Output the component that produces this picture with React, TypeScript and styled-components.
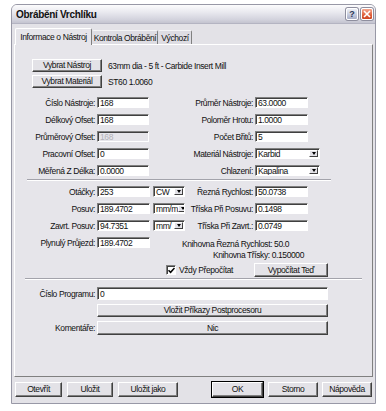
import React from "react";
import styled, { createGlobalStyle } from "styled-components";

const GlobalStyle = createGlobalStyle`
  html, body {
    margin: 0;
    padding: 0;
    background: #ffffff;
  }
  body {
    font-family: "Liberation Sans", Arial, sans-serif;
    font-size: 8.5px;
    letter-spacing: -0.4px;
    color: #111;
  }
  * {
    box-sizing: border-box;
  }
`;

const Window = styled.div`
  margin: 4px 0 0 11px;
  width: 365px;
  height: 400px;
  border: 1px solid #9898a6;
  border-radius: 6px 6px 0 0;
  background: #e3e2e7;
  display: flex;
  flex-direction: column;
  overflow: hidden;
`;

const TitleBar = styled.div`
  height: 19px;
  flex: none;
  display: flex;
  align-items: center;
  padding: 0 2px 0 4px;
  background: linear-gradient(#fcfcfd, #e9e9ef 40%, #d3d3dd 80%, #c4c4d0);
  border-bottom: 1px solid #b4b4c2;

  .title {
    font-weight: bold;
    font-size: 10px;
    letter-spacing: -0.3px;
    flex: 1;
  }
`;

const CaptionButton = styled.div<{ $close?: boolean }>`
  width: 12px;
  height: 12px;
  margin-left: 3px;
  border: 1px solid #fff;
  border-radius: 2px;
  display: flex;
  align-items: center;
  justify-content: center;
  font-weight: bold;
  font-size: 9px;
  letter-spacing: 0;
  color: ${(p) => (p.$close ? "#fff" : "#2b3555")};
  background: ${(p) =>
    p.$close
      ? "linear-gradient(#f4a890, #e0603c 60%, #cc4422)"
      : "linear-gradient(#eef0f6, #c3c9dc 60%, #a9b0c8)"};
  box-shadow: 0 0 0 1px #8e8e9e;
`;

const Body = styled.div`
  flex: 1;
  display: flex;
  flex-direction: column;
  padding: 4px 2px 6px 2px;
`;

const TabStrip = styled.div`
  height: 16px;
  display: flex;
  align-items: flex-end;
  padding-left: 1px;
  position: relative;
  z-index: 1;
`;

const Tab = styled.div<{ $active?: boolean; $w: number }>`
  width: ${(p) => p.$w}px;
  height: ${(p) => (p.$active ? "17px" : "14px")};
  margin-bottom: ${(p) => (p.$active ? "-1px" : "0")};
  display: flex;
  align-items: center;
  justify-content: center;
  white-space: nowrap;
  background: ${(p) => (p.$active ? "#e6e5ea" : "#dedde3")};
  border-top: 1px solid ${(p) => (p.$active ? "#ffffff" : "#f4f4f6")};
  border-left: 1px solid ${(p) => (p.$active ? "#ffffff" : "transparent")};
  border-right: 1px solid #808080;
  border-radius: 2px 2px 0 0;
`;

const Panel = styled.div`
  height: 333px;
  border: 1px solid;
  border-color: #ffffff #808080 #808080 #ffffff;
  background: #e6e5ea;
  padding-top: 14px;
  display: flex;
  flex-direction: column;
`;

const ButtonLine = styled.div`
  height: 13px;
  display: flex;
  align-items: center;
  gap: 6px;
  padding-left: 17px;

  & + & {
    margin-top: 3px;
  }
`;

const PushButton = styled.div<{ $w?: number; $default?: boolean }>`
  width: ${(p) => (p.$w ? `${p.$w}px` : "auto")};
  height: 100%;
  flex: none;
  display: flex;
  align-items: center;
  justify-content: center;
  white-space: nowrap;
  padding-bottom: 1px;
  background: #e3e2e7;
  border: 1px solid;
  border-color: #ffffff #404040 #404040 #ffffff;
  box-shadow: ${(p) =>
    p.$default
      ? "inset -1px -1px #808080, 0 0 0 1px #000"
      : "inset -1px -1px #808080"};
`;

const FieldGrid = styled.div<{ $cols: string; $rows: string; $gap: number; $top: number }>`
  display: grid;
  grid-template-columns: ${(p) => p.$cols};
  grid-template-rows: ${(p) => p.$rows};
  row-gap: ${(p) => p.$gap}px;
  align-items: center;
  margin-top: ${(p) => p.$top}px;
`;

const Label = styled.div`
  text-align: right;
  padding-right: 2px;
  white-space: nowrap;
`;

const Input = styled.div<{ $w: number; $disabled?: boolean }>`
  width: ${(p) => p.$w}px;
  height: 100%;
  background: ${(p) => (p.$disabled ? "#e6e5ea" : "#ffffff")};
  color: ${(p) => (p.$disabled ? "#b2b2b8" : "#111")};
  border: 1px solid;
  border-color: #808080 #ffffff #ffffff #808080;
  box-shadow: inset 1px 1px #404040;
  padding-left: 2px;
  display: flex;
  align-items: center;
  white-space: nowrap;
  overflow: hidden;
`;

const Select = styled(Input)`
  justify-content: space-between;
  padding-right: 1px;
  justify-self: end;
`;

const DropArrow = styled.span`
  width: 9px;
  height: 7px;
  flex: none;
  background: #e3e2e7;
  border: 1px solid;
  border-color: #ffffff #404040 #404040 #ffffff;
  display: flex;
  align-items: center;
  justify-content: center;

  &::after {
    content: "";
    border-left: 2.5px solid transparent;
    border-right: 2.5px solid transparent;
    border-top: 3px solid #000;
  }
`;

const Separator = styled.div<{ $left: number; $right: number; $top: number }>`
  height: 2px;
  flex: none;
  margin: ${(p) => `${p.$top}px ${p.$right}px 0 ${p.$left}px`};
  border-top: 1px solid #a3a3ab;
  border-bottom: 1px solid #ffffff;
`;

const LibraryText = styled.div<{ $indent: number; $span?: boolean }>`
  padding-left: ${(p) => p.$indent}px;
  white-space: nowrap;
  height: 11px;
  line-height: 11px;
  ${(p) => (p.$span ? "grid-column: 3 / -1; margin-top: 4px;" : "margin-top: 2px;")}
`;

const CheckRow = styled.div`
  height: 14px;
  margin-top: 2px;
  display: grid;
  grid-template-columns: 151px 88px 74px;
  align-items: center;
`;

const CheckLabel = styled.label`
  grid-column: 2;
  display: flex;
  align-items: center;
  gap: 3px;
  white-space: nowrap;
`;

const CheckBox = styled.span`
  width: 10px;
  height: 10px;
  background: #fff;
  border: 1px solid;
  border-color: #808080 #ffffff #ffffff #808080;
  box-shadow: inset 1px 1px #404040;
  display: flex;
  align-items: center;
  justify-content: center;
`;

const BottomBar = styled.div`
  height: 15px;
  margin-top: 5px;
  display: flex;
  padding: 0 1px;
  gap: 5px;

  .spacer {
    flex: 1;
  }
`;

const CloseIcon = () => (
  <svg width="8" height="8" viewBox="0 0 8 8">
    <path d="M1 1 L7 7 M7 1 L1 7" stroke="#fff" strokeWidth="1.6" />
  </svg>
);

const Check = () => (
  <svg width="7" height="7" viewBox="0 0 7 7">
    <path d="M0.5 3.2 L2.6 5.3 L6.5 1" stroke="#000" strokeWidth="1.5" fill="none" />
  </svg>
);

const App = () => {
  return (
    <>
      <GlobalStyle />
      <Window>
        <TitleBar>
          <span className="title">Obrábění Vrchlíku</span>
          <CaptionButton>?</CaptionButton>
          <CaptionButton $close>
            <CloseIcon />
          </CaptionButton>
        </TitleBar>
        <Body>
          <TabStrip>
            <Tab $active $w={77}>Informace o Nástroj</Tab>
            <Tab $w={66}>Kontrola Obrábění</Tab>
            <Tab $w={34}>Výchozí</Tab>
          </TabStrip>
          <Panel>
            <ButtonLine>
              <PushButton $w={70}>Vybrat Nástroj</PushButton>
              <span>63mm dia - 5 ft - Carbide Insert Mill</span>
            </ButtonLine>
            <ButtonLine>
              <PushButton $w={70}>Vybrat Materiál</PushButton>
              <span>ST60 1.0060</span>
            </ButtonLine>

            <FieldGrid $cols="82px 52px 106px 65px" $rows="repeat(5, 11px)" $gap={6} $top={9}>
              <Label>Číslo Nástroje:</Label>
              <Input $w={52}>168</Input>
              <Label>Průměr Nástroje:</Label>
              <Input $w={53}>63.0000</Input>

              <Label>Délkový Ofset:</Label>
              <Input $w={52}>168</Input>
              <Label>Poloměr Hrotu:</Label>
              <Input $w={53}>1.0000</Input>

              <Label>Průměrový Ofset:</Label>
              <Input $w={52} $disabled>168</Input>
              <Label>Počet Břitů:</Label>
              <Input $w={53}>5</Input>

              <Label>Pracovní Ofset:</Label>
              <Input $w={52}>0</Input>
              <Label>Materiál Nástroje:</Label>
              <Select $w={65}>
                Karbid
                <DropArrow />
              </Select>

              <Label>Měřená Z Délka:</Label>
              <Input $w={52}>0.0000</Input>
              <Label>Chlazení:</Label>
              <Select $w={65}>
                Kapalina
                <DropArrow />
              </Select>
            </FieldGrid>

            <Separator $left={12} $right={41} $top={3} />

            <FieldGrid $cols="82px 53px 35px 70px 53px" $rows="repeat(4, 11px)" $gap={6} $top={5}>
              <Label>Otáčky:</Label>
              <Input $w={53}>253</Input>
              <Select $w={32}>
                CW
                <DropArrow />
              </Select>
              <Label>Řezná Rychlost:</Label>
              <Input $w={53}>50.0738</Input>

              <Label>Posuv:</Label>
              <Input $w={53}>189.4702</Input>
              <Select $w={32}>
                mm/m
                <DropArrow />
              </Select>
              <Label>Tříska Při Posuvu:</Label>
              <Input $w={53}>0.1498</Input>

              <Label>Zavrt. Posuv:</Label>
              <Input $w={53}>94.7351</Input>
              <Select $w={32}>
                mm/
                <DropArrow />
              </Select>
              <Label>Tříska Při Zavrt.:</Label>
              <Input $w={53}>0.0749</Input>

              <Label>Plynulý Průjezd:</Label>
              <Input $w={53}>189.4702</Input>
              <LibraryText $indent={32} $span>
                Knihovna Řezná Rychlost: 50.0
              </LibraryText>
            </FieldGrid>

            <LibraryText $indent={198}>Knihovna Třísky: 0.150000</LibraryText>

            <CheckRow>
              <CheckLabel>
                <CheckBox>
                  <Check />
                </CheckBox>
                Vždy Přepočítat
              </CheckLabel>
              <PushButton $w={74}>Vypočítat Teď</PushButton>
            </CheckRow>

            <Separator $left={10} $right={10} $top={1} />

            <FieldGrid $cols="82px 231px" $rows="13px 13px 14px" $gap={4} $top={7}>
              <Label>Číslo Programu:</Label>
              <Input $w={231}>0</Input>
              <span />
              <PushButton $w={231}>Vložit Příkazy Postprocesoru</PushButton>
              <Label>Komentáře:</Label>
              <PushButton $w={231}>Nic</PushButton>
            </FieldGrid>
          </Panel>
          <BottomBar>
            <PushButton $w={47}>Otevřít</PushButton>
            <PushButton $w={46}>Uložit</PushButton>
            <PushButton $w={60}>Uložit jako</PushButton>
            <span className="spacer" />
            <PushButton $w={51} $default>
              OK
            </PushButton>
            <PushButton $w={50}>Storno</PushButton>
            <PushButton $w={50} style={{ marginLeft: -1 }}>
              Nápověda
            </PushButton>
          </BottomBar>
        </Body>
      </Window>
    </>
  );
};

export default App;
